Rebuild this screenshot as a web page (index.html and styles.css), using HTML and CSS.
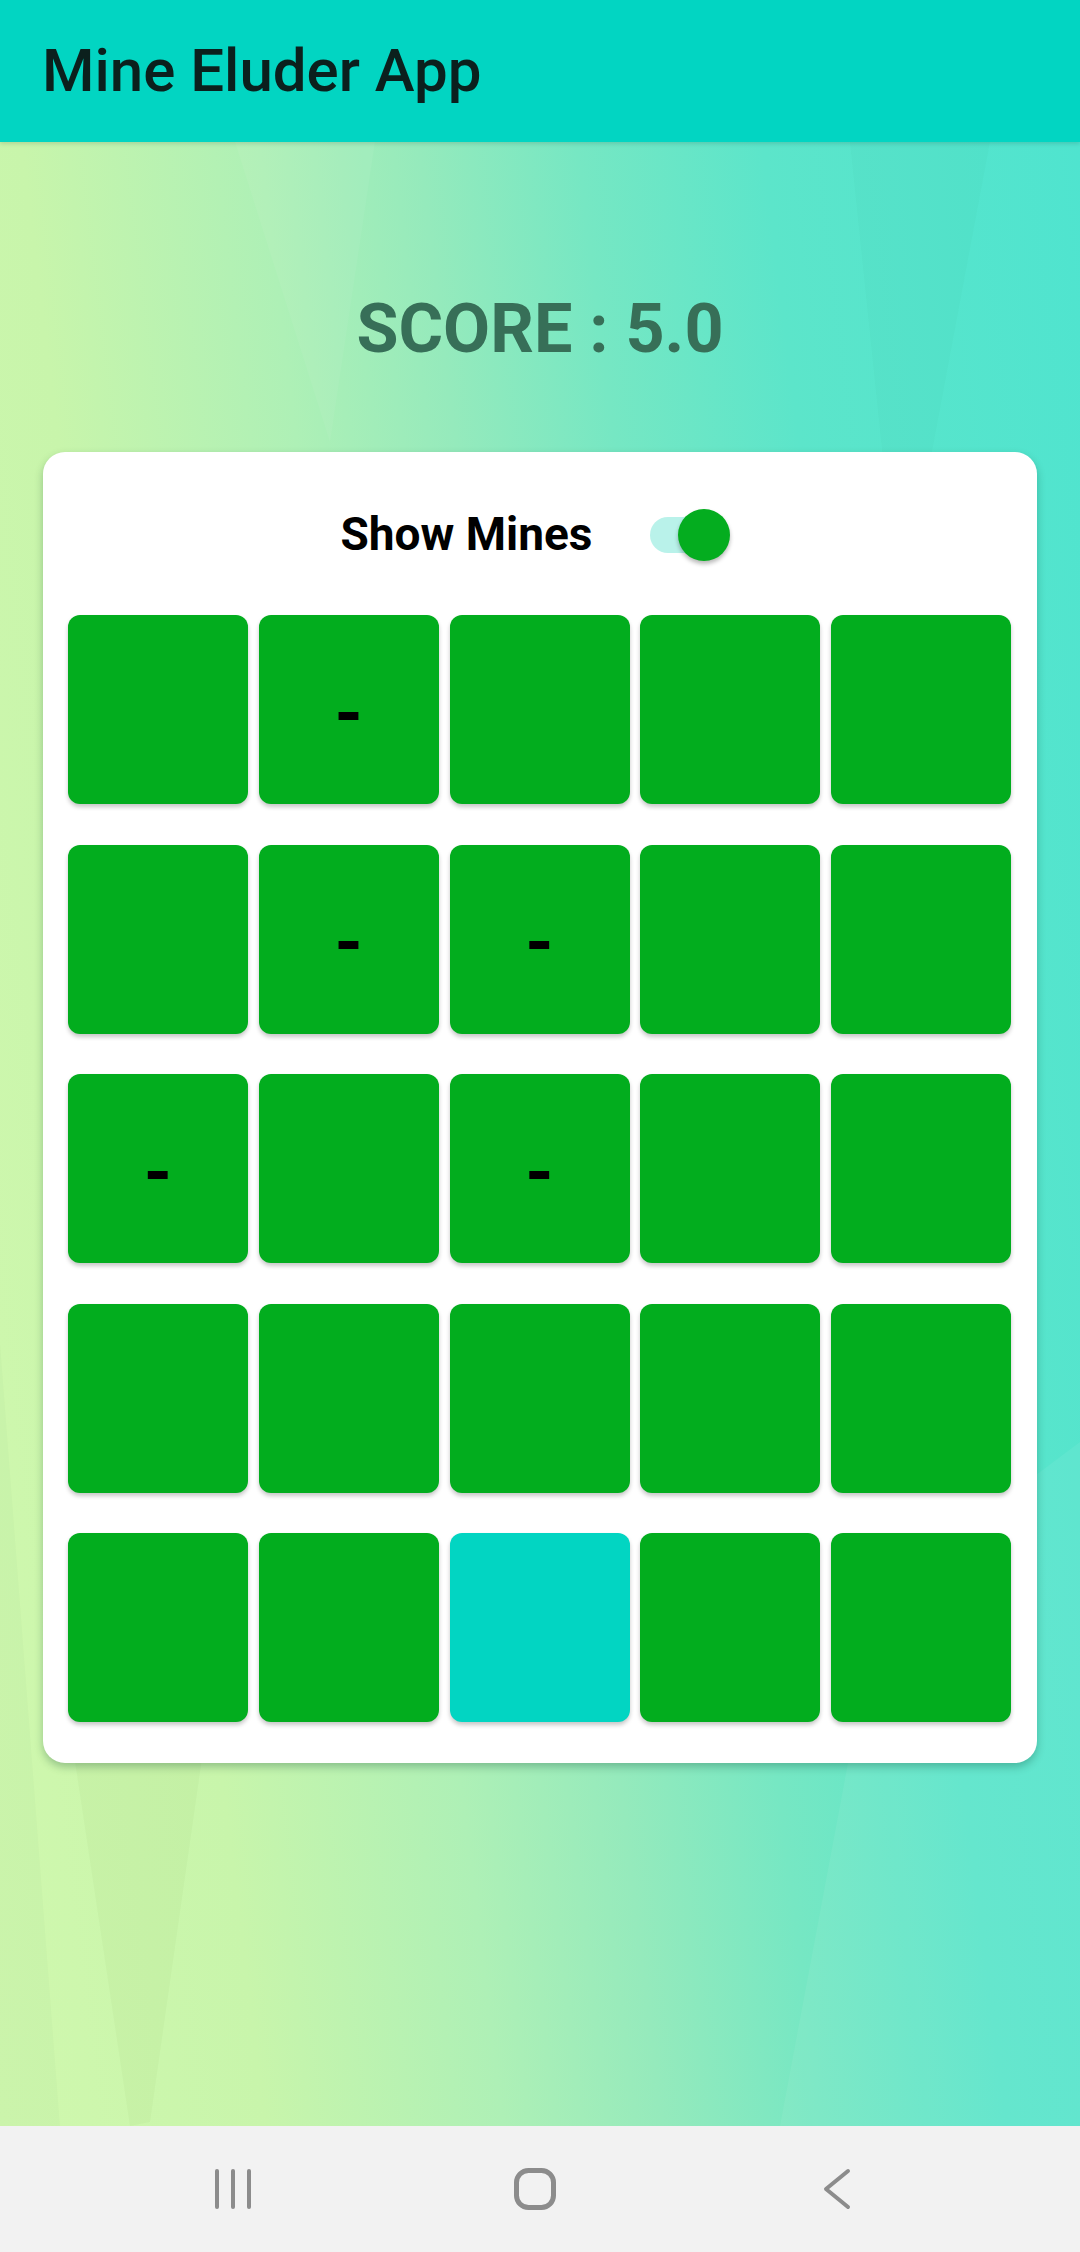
FILE: index.html
```html
<!DOCTYPE html>
<html lang="en">
<head>
<meta charset="utf-8">
<title>Mine Eluder App</title>
<link rel="stylesheet" href="styles.css">
</head>
<body>
<div class="screen">
  <header class="appbar">
    <h1 class="title">Mine Eluder App</h1>
  </header>
  <main class="content">
    <div class="facets" aria-hidden="true">
      <span class="facet f1"></span>
      <span class="facet f2"></span>
      <span class="facet f3"></span>
      <span class="facet f4"></span>
      <span class="facet f5"></span>
    </div>
    <div class="score">SCORE : 5.0</div>
    <section class="card">
      <div class="toggle-row">
        <span class="toggle-label">Show Mines</span>
        <span class="switch"><span class="track"></span><span class="thumb"></span></span>
      </div>
      <div class="grid">
        <button class="tile"></button>
        <button class="tile"><span class="dash">-</span></button>
        <button class="tile"></button>
        <button class="tile"></button>
        <button class="tile"></button>

        <button class="tile"></button>
        <button class="tile"><span class="dash">-</span></button>
        <button class="tile"><span class="dash">-</span></button>
        <button class="tile"></button>
        <button class="tile"></button>

        <button class="tile"><span class="dash">-</span></button>
        <button class="tile"></button>
        <button class="tile"><span class="dash">-</span></button>
        <button class="tile"></button>
        <button class="tile"></button>

        <button class="tile"></button>
        <button class="tile"></button>
        <button class="tile"></button>
        <button class="tile"></button>
        <button class="tile"></button>

        <button class="tile"></button>
        <button class="tile"></button>
        <button class="tile tile-open"></button>
        <button class="tile"></button>
        <button class="tile"></button>
      </div>
    </section>
  </main>
  <nav class="navbar">
    <span class="nav-btn">
      <svg width="44" height="44" viewBox="0 0 44 44"><g stroke="#8c8c8c" stroke-width="4" stroke-linecap="round" fill="none"><line x1="6" y1="4" x2="6" y2="40"/><line x1="22" y1="4" x2="22" y2="40"/><line x1="38" y1="4" x2="38" y2="40"/></g></svg>
    </span>
    <span class="nav-btn">
      <svg width="44" height="44" viewBox="0 0 44 44"><rect x="3.5" y="3.5" width="37" height="37" rx="12" ry="12" stroke="#8c8c8c" stroke-width="5" fill="none"/></svg>
    </span>
    <span class="nav-btn">
      <svg width="44" height="44" viewBox="0 0 44 44"><polyline points="33,4 11,22 33,40" stroke="#8c8c8c" stroke-width="4" stroke-linecap="round" stroke-linejoin="round" fill="none"/></svg>
    </span>
  </nav>
</div>
</body>
</html>
```
FILE: styles.css
```css
* { box-sizing: border-box; }
html, body { margin: 0; padding: 0; }
body {
  width: 1080px;
  height: 2252px;
  font-family: Roboto, "Noto Sans", "Liberation Sans", sans-serif;
  overflow: hidden;
}
.screen {
  display: flex;
  flex-direction: column;
  width: 1080px;
  height: 2252px;
}
.appbar {
  height: 142px;
  flex: 0 0 142px;
  background: #02d5c2;
  display: flex;
  align-items: center;
  padding-left: 42px;
  box-shadow: 0 2px 4px rgba(0, 0, 0, 0.12);
  position: relative;
  z-index: 2;
}
.title {
  margin: 0;
  font-size: 60px;
  font-weight: 500;
  color: #0b201d;
  line-height: 1.17;
}
.content {
  position: relative;
  flex: 1 1 auto;
  background: linear-gradient(83deg, #d0f8ae 0%, #c8f5ab 20%, #aef0b6 38%, #95eabc 50%, #76e7c3 62%, #5ce5ca 76%, #4fe4cf 100%);
  display: flex;
  flex-direction: column;
  align-items: center;
  padding-top: 146px;
}
.facets {
  position: absolute;
  inset: 0;
  overflow: hidden;
  pointer-events: none;
}
.facet {
  position: absolute;
  inset: 0;
}
.f1 {
  background: rgba(255, 255, 255, 0.05);
  clip-path: polygon(235px 0, 375px 0, 330px 300px);
}
.f2 {
  background: rgba(0, 80, 60, 0.02);
  clip-path: polygon(850px 0, 990px 0, 900px 480px);
}
.f3 {
  background: rgba(60, 80, 0, 0.03);
  clip-path: polygon(60px 1520px, 210px 1560px, 150px 1980px, 130px 1984px);
}
.f4 {
  background: rgba(255, 255, 255, 0.06);
  clip-path: polygon(880px 1450px, 1080px 1300px, 1080px 1984px, 780px 1984px);
}
.f5 {
  background: rgba(0, 60, 40, 0.02);
  clip-path: polygon(0 1200px, 60px 1984px, 0 1984px);
}
.score {
  position: relative;
  font-size: 68.25px;
  font-weight: 700;
  line-height: 82px;
  color: #376f58;
  height: 82px;
}
.card {
  position: relative;
  margin-top: 82px;
  width: 994px;
  background: #ffffff;
  border-radius: 22px;
  box-shadow: 0 4px 8px rgba(0, 60, 40, 0.28);
  padding: 55px 26px 41px 25px;
}
.toggle-row {
  display: flex;
  justify-content: center;
  align-items: center;
  height: 55px;
  padding-right: 8px;
}
.toggle-label {
  font-size: 46px;
  font-weight: 700;
  color: #000;
  line-height: 55px;
}
.switch {
  position: relative;
  width: 80px;
  height: 52px;
  margin-left: 58px;
  display: inline-block;
}
.track {
  position: absolute;
  left: 0;
  top: 8px;
  width: 72px;
  height: 36px;
  border-radius: 18px;
  background: #b9f2ea;
}
.thumb {
  position: absolute;
  right: 0;
  top: 0;
  width: 52px;
  height: 52px;
  border-radius: 50%;
  background: #04ad1f;
  box-shadow: 0 3px 4px rgba(0, 0, 0, 0.28);
}
.grid {
  margin-top: 53px;
  display: grid;
  grid-template-columns: repeat(5, 1fr);
  column-gap: 10.75px;
  row-gap: 40.5px;
}
.tile {
  height: 189px;
  border: none;
  border-radius: 12px;
  background: #02ad1e;
  box-shadow: 0 3px 4px rgba(0, 0, 0, 0.22);
  padding: 0;
  display: flex;
  align-items: center;
  justify-content: center;
  font-family: Roboto, "Noto Sans", sans-serif;
}
.tile-open {
  background: #02d5c2;
}
.dash {
  font-size: 72px;
  font-weight: 700;
  color: #000;
  line-height: 1;
  margin-top: 8px;
}
.navbar {
  flex: 0 0 126px;
  height: 126px;
  background: #f2f2f2;
  display: flex;
  justify-content: center;
  align-items: center;
  gap: 258px;
  padding-right: 10px;
}
.nav-btn {
  width: 44px;
  height: 44px;
  display: flex;
}
```
